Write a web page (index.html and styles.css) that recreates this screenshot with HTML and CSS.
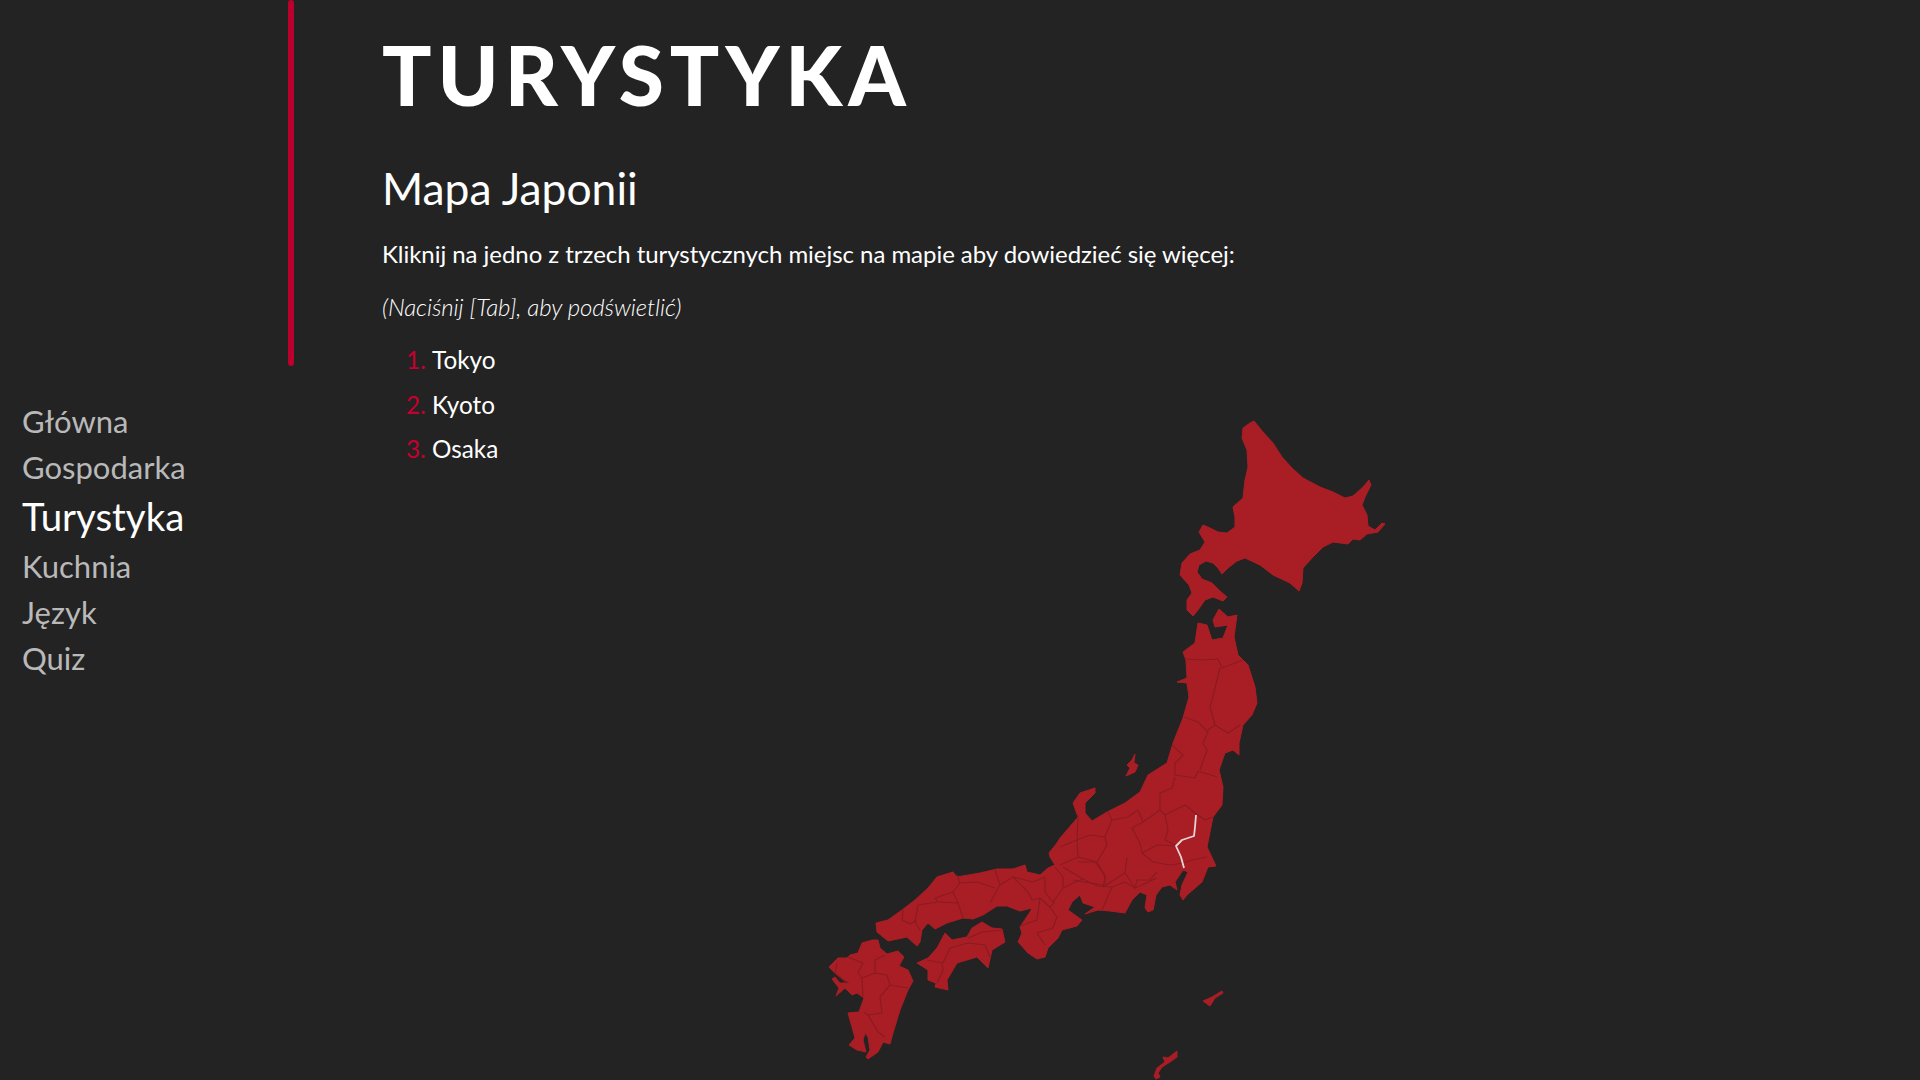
FILE: index.html
```html
<!DOCTYPE html>
<html lang="pl">
<head>
<meta charset="utf-8">
<title>Turystyka</title>
<link rel="stylesheet" href="styles.css">
</head>
<body>
<div class="page">
	<aside class="side">
		<div class="bar"></div>
		<ul class="nav">
			<li><a href="#">Główna</a></li>
			<li><a href="#">Gospodarka</a></li>
			<li class="active"><a href="#">Turystyka</a></li>
			<li><a href="#">Kuchnia</a></li>
			<li><a href="#">Język</a></li>
			<li><a href="#">Quiz</a></li>
		</ul>
	</aside>
	<main class="content">
		<h1 class="title">TURYSTYKA</h1>
		<h2 class="subtitle">Mapa Japonii</h2>
		<p class="lead">Kliknij na jedno z trzech turystycznych miejsc na mapie aby dowiedzieć się więcej:</p>
		<p class="hint">(Naciśnij [Tab], aby podświetlić)</p>
		<div class="tour">
			<ol class="places">
				<li>Tokyo</li>
				<li>Kyoto</li>
				<li>Osaka</li>
			</ol>
			<svg class="map" viewBox="820 420 580 660" width="580" height="660">
				<g class="land">
					<!-- Hokkaido -->
					<path d="M1254 421L1263 432L1273 443L1282 457L1292 468L1303 478L1320 487L1333 492L1345 498L1353 496L1363 487L1369 480L1371 485L1365 497L1362 505L1367 515L1368 526L1375 530L1382 523L1385 524L1378 532L1367 534L1360 540L1353 539L1348 544L1333 542L1323 547L1313 557L1303 568L1302 583L1299 591L1290 583L1273 575L1260 565L1245 558L1237 561L1228 568L1222 574L1218 568L1213 563L1206 561L1199 565L1197 572L1202 579L1212 583L1220 591L1227 597L1223 601L1213 597L1205 600L1198 610L1193 616L1187 610L1187 600L1192 593L1189 585L1180 575L1182 563L1190 554L1200 550L1205 542L1199 532L1203 525L1210 528L1218 532L1227 533L1235 527L1235 517L1233 507L1243 498L1245 480L1248 467L1247 450L1242 438L1243 428L1250 423Z"/>
					<!-- Honshu -->
					<path d="M1219 609L1228 617L1237 615L1234 637L1238 655L1248 665L1255 687L1257 703L1252 715L1243 725L1239 743L1239 755L1233 750L1225 753L1219 770L1223 787L1222 805L1213 817L1207 847L1216 866L1208 867L1202 882L1187 895L1183 900L1180 895L1182 885L1188 872L1183 870L1175 882L1177 890L1170 885L1162 887L1156 895L1153 910L1148 912L1145 908L1147 895L1140 892L1132 900L1125 913L1110 911L1098 910L1085 914L1095 907L1083 903L1080 895L1072 902L1068 910L1082 920L1077 926L1062 930L1058 938L1048 948L1045 957L1037 959L1028 953L1018 942L1022 933L1020 927L1030 912L1032 908L1020 911L1007 906L997 906L983 915L973 919L963 918L947 923L935 929L928 923L922 930L920 942L917 946L907 937L888 941L877 932L876 923L888 920L902 910L915 900L928 888L937 877L953 872L957 877L980 873L997 869L1013 869L1025 865L1027 872L1040 875L1048 868L1055 865L1050 857L1049 853L1057 843L1060 838L1073 823L1078 817L1073 803L1080 793L1095 788L1095 793L1085 803L1085 813L1092 821L1107 812L1125 803L1140 792L1148 775L1167 763L1173 743L1183 718L1189 697L1187 683L1177 682L1187 678L1186 660L1183 652L1195 643L1198 623L1207 625L1212 640L1223 638L1228 625L1215 627L1213 620Z"/>
					<!-- Sado -->
					<path d="M1135 754L1132 760L1127 765L1130 768L1126 776L1135 772L1138 765L1134 763Z"/>
					<!-- Shikoku -->
					<path d="M982 922L992 928L1002 929L1005 942L992 950L988 968L977 957L957 963L947 980L948 990L935 987L936 983L928 980L928 970L917 963L928 958L937 948L945 933L952 940L967 937L972 928Z"/>
					<!-- Kyushu -->
					<path d="M878 940L880 948L887 954L898 951L904 957L899 966L908 970L913 981L908 990L900 1010L893 1033L890 1044L883 1042L878 1052L868 1059L866 1057L870 1050L868 1037L865 1033L863 1040L866 1052L857 1050L849 1045L855 1038L852 1027L848 1013L859 1012L864 998L857 993L852 995L845 988L836 996L839 988L832 979L835 977L840 983L850 983L837 975L829 967L838 958L847 958L850 955L858 953L862 943L872 940Z"/>
					<!-- islands -->
					<path d="M1222 991L1223 993L1215 998L1210 1006L1203 1001L1212 997Z"/>
					<path d="M1177 1051L1177 1057L1170 1062L1162 1067L1158 1073L1160 1077L1156 1079L1154 1076L1157 1068L1165 1062L1163 1057L1168 1058Z"/>
				</g>
				<g class="borders">
					<path d="M1186 659L1203 660L1218 659L1222 668L1243 660"/>
					<path d="M1220 668L1215 688L1210 707L1215 725"/>
					<path d="M1184 717L1198 722L1208 732L1203 743L1207 750L1200 770"/>
					<path d="M1208 730L1215 725L1228 733L1240 725"/>
					<path d="M1172 745L1183 755L1175 763L1175 775L1195 778L1198 771L1217 777"/>
					<path d="M1175 777L1172 788L1160 793L1160 810L1165 815"/>
					<path d="M1165 815L1185 805L1195 813L1205 820L1213 817"/>
					<path d="M1165 815L1168 830L1165 840L1177 846"/>
					<path d="M1160 810L1143 822L1132 828L1140 843L1142 853"/>
					<path d="M1142 853L1157 845L1177 846"/>
					<path d="M1142 853L1153 862L1170 865L1183 863L1192 860L1207 857"/>
					<path d="M1108 812L1112 820L1128 817L1138 810L1143 822"/>
					<path d="M1112 820L1105 837L1107 845L1097 862L1105 877L1103 887"/>
					<path d="M1078 815L1077 840L1060 847"/>
					<path d="M1077 840L1090 835L1105 837"/>
					<path d="M1077 840L1078 857L1060 865"/>
					<path d="M1078 857L1097 862"/>
					<path d="M1127 857L1125 873L1135 888L1157 878"/>
					<path d="M1103 887L1125 873"/>
					<path d="M1073 880L1103 885"/>
					<path d="M1055 867L1063 877L1063 888L1053 902L1045 892L1045 877"/>
					<path d="M1045 877L1033 882L1013 877"/>
					<path d="M1013 877L1028 892L1032 900L1040 898L1050 907L1055 902"/>
					<path d="M1040 898L1037 920L1020 926"/>
					<path d="M1050 907L1057 917L1053 928L1037 933L1045 945"/>
					<path d="M1063 888L1073 883L1083 879L1097 886L1112 887L1102 910"/>
					<path d="M1083 879L1063 867"/>
					<path d="M1078 862L1095 862L1105 875L1105 885"/>
					<path d="M1112 887L1125 882L1135 888L1137 880L1150 880L1157 872"/>
					<path d="M995 870L1000 885L990 903"/>
					<path d="M1000 885L1013 877"/>
					<path d="M957 875L960 883L953 892L958 903L963 918"/>
					<path d="M960 883L977 882L995 888"/>
					<path d="M953 892L935 898L938 902L918 905L915 922L920 930"/>
					<path d="M958 903L939 902"/>
					<path d="M903 910L902 920L910 924L917 920"/>
					<path d="M943 963L950 948L968 943L985 945L990 957"/>
					<path d="M968 938L982 932L1002 930"/>
					<path d="M927 960L942 963L943 970L937 983"/>
					<path d="M848 957L863 963L858 973L862 978L875 973L875 960L885 955"/>
					<path d="M875 973L887 975L890 985L908 988"/>
					<path d="M890 985L880 997L882 1013L868 1015"/>
					<path d="M868 1015L878 1032L885 1037"/>
					<path d="M837 963L835 973L847 983"/>
					<path d="M862 978L863 997"/>
					<path d="M864 1012L868 1015"/>
				</g>
				<path class="route" d="M1196 815L1195 827L1194 836L1182 840L1176 846L1181 857L1184 868"/>
			</svg>
		</div>
	</main>
</div>
</body>
</html>
```

FILE: styles.css
```css
* {
	font-family: Lato, "Open Sans", sans-serif;
}
html, body {
	margin: 0;
	height: 100%;
	overflow: hidden;
}
body {
	background-color: #232323;
	color: #fff;
}
.page {
	display: flex;
}
.side {
	width: 294px;
	flex-shrink: 0;
}
.bar {
	width: 6px;
	height: 366px;
	margin-left: 288px;
	background-color: #bc002d;
	border-radius: 3px;
}
.nav {
	list-style: none;
	margin: 32px 0 0 22px;
	padding: 0;
	font-size: 31px;
	line-height: 46px;
}
.nav a {
	color: #b9b9b9;
	text-decoration: none;
}
.nav .active {
	font-size: 38.4px;
	line-height: 53px;
}
.nav .active a {
	color: #fff;
}
.content {
	padding-left: 88px;
}
.title {
	margin: 26px 0 0;
	font-size: 82px;
	font-weight: 900;
	line-height: 96px;
	letter-spacing: 6px;
}
.subtitle {
	margin: 39px 0 0;
	font-size: 44.4px;
	font-weight: 400;
	line-height: 54px;
}
.lead {
	margin: 21px 0 0;
	font-size: 24px;
	font-weight: 400;
	line-height: 36px;
	letter-spacing: -0.04px;
}
.hint {
	margin: 17px 0 0;
	font-size: 24px;
	font-weight: 300;
	font-style: italic;
	line-height: 36px;
	letter-spacing: -0.08px;
}
.tour {
	display: grid;
	grid-template-columns: 438px 580px;
}
.places {
	margin: 17px 0 0;
	padding-left: 50px;
	font-size: 24.3px;
	line-height: 36px;
}
.places li {
	margin-bottom: 8.5px;
}
.places li::marker {
	color: #c4002f;
	font-weight: 400;
}
.map {
	display: block;
	margin-top: 95px;
	filter: blur(0.5px);
}
.land path {
	fill: #a91e25;
	stroke: #a91e25;
	stroke-width: 1;
	stroke-linejoin: round;
}
.borders path {
	fill: none;
	stroke: #8a1b21;
	stroke-width: 1.2;
	stroke-linejoin: round;
}
.route {
	fill: none;
	stroke: #e4d6d7;
	stroke-width: 1.8;
	stroke-linejoin: round;
}
```
